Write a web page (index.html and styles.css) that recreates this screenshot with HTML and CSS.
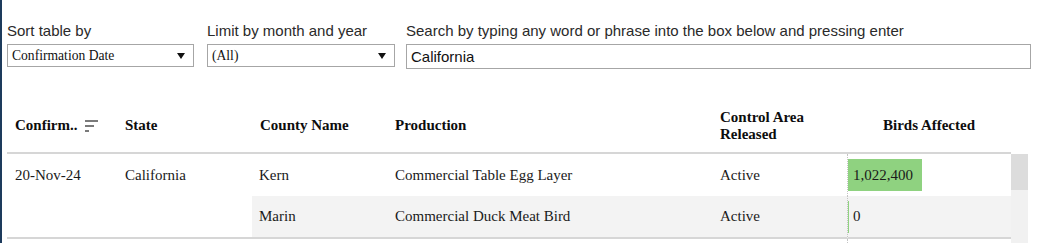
FILE: index.html
```html
<!DOCTYPE html>
<html lang="en">
<head>
<meta charset="utf-8">
<title>Confirmations</title>
<link rel="stylesheet" href="styles.css">
</head>
<body>
<div class="page">
  <div class="controls">
    <div class="ctl ctl-sort">
      <div class="lbl">Sort table by</div>
      <div class="select"><span class="sel-text">Confirmation Date</span><svg class="caret" width="8" height="6" viewBox="0 0 8 6"><polygon points="0,0 8,0 4,6" fill="#111"/></svg></div>
    </div>
    <div class="ctl ctl-limit">
      <div class="lbl">Limit by month and year</div>
      <div class="select"><span class="sel-text">(All)</span><svg class="caret" width="8" height="6" viewBox="0 0 8 6"><polygon points="0,0 8,0 4,6" fill="#111"/></svg></div>
    </div>
    <div class="ctl ctl-search">
      <div class="lbl">Search by typing any word or phrase into the box below and pressing enter</div>
      <div class="search">California</div>
    </div>
  </div>

  <div class="table">
    <div class="thead">
      <div class="th">Confirm..<svg class="sort-ico" width="14" height="12" viewBox="0 0 14 12"><rect x="0" y="0" width="13" height="2" fill="#7a7a7a"/><rect x="0" y="5" width="9" height="2" fill="#7a7a7a"/><rect x="0" y="10" width="4" height="2" fill="#7a7a7a"/></svg></div>
      <div class="th">State</div>
      <div class="th">County Name</div>
      <div class="th">Production</div>
      <div class="th">Control Area<br>Released</div>
      <div class="th th-center">Birds Affected</div>
    </div>
    <div class="tbody-wrap">
      <div class="tbody">
        <div class="td td-date">20-Nov-24</div>
        <div class="td td-state">California</div>
        <div class="td r1 first">Kern</div>
        <div class="td r1">Commercial Table Egg Layer</div>
        <div class="td r1">Active</div>
        <div class="td birds r1"><div class="bar" style="width:74px"></div><span class="val">1,022,400</span></div>

        <div class="td r2 alt first">Marin</div>
        <div class="td r2 alt">Commercial Duck Meat Bird</div>
        <div class="td r2 alt">Active</div>
        <div class="td birds r2 alt"><div class="bar" style="width:1px"></div><span class="val">0</span></div>

        <div class="filler"></div>
        <div class="filler birds-fill"></div>
      </div>
      <div class="scrollbar"><div class="thumb"></div></div>
    </div>
  </div>
</div>
</body>
</html>
```
FILE: styles.css
```css
html, body {
  height: 100%;
}
body {
  margin: 0;
  border-left: 2px solid #1d3b5c;
  box-sizing: border-box;
  background: #fff;
  overflow: hidden;
}
.page {
  padding: 0 6px 0 5px;
}
.controls {
  display: flex;
  padding-top: 21px;
}
.ctl-sort { width: 187px; margin-right: 13px; }
.ctl-limit { width: 188px; margin-right: 11px; }
.ctl-search { flex: 1; }
.lbl {
  font-family: "Liberation Sans", Arial, sans-serif;
  font-size: 15px;
  line-height: 20px;
  color: #2a2a2a;
  margin-bottom: 3px;
  white-space: nowrap;
}
.select {
  height: 23px;
  box-sizing: border-box;
  border: 1px solid #a6a6a6;
  display: flex;
  align-items: center;
  justify-content: space-between;
  padding: 0 8px 0 4px;
}
.sel-text {
  font-family: "Liberation Serif", "Times New Roman", serif;
  font-size: 13.6px;
  color: #111;
}
.caret { display: block; }
.search {
  height: 25px;
  box-sizing: border-box;
  border: 1px solid #a6a6a6;
  display: flex;
  align-items: center;
  padding: 0 4px;
  font-family: "Liberation Sans", Arial, sans-serif;
  font-size: 15px;
  color: #111;
}
.table {
  margin-top: 32px;
  font-family: "Liberation Serif", "Times New Roman", serif;
  font-size: 15px;
  color: #1a1a1a;
}
.thead {
  display: grid;
  grid-template-columns: 110px 135px 135px 325px 135px 164px;
  height: 53px;
  padding-bottom: 2px;
  border-bottom: 2px solid #d6d6d6;
  width: 1004px;
  box-sizing: border-box;
}
.th {
  display: flex;
  align-items: center;
  padding-left: 8px;
  font-weight: bold;
  color: #0d0d0d;
  line-height: 17px;
}
.th-center {
  justify-content: center;
  padding-left: 0;
}
.sort-ico {
  margin-left: 7px;
  margin-top: 1px;
}
.tbody-wrap {
  display: flex;
  height: 90px;
  overflow: hidden;
}
.tbody {
  display: grid;
  grid-template-columns: 110px 135px 135px 325px 135px 164px;
  grid-template-rows: 42px 43px 20px;
  width: 1004px;
}
.td {
  display: flex;
  align-items: center;
  padding-left: 8px;
  white-space: nowrap;
}
.td-date, .td-state {
  grid-row: 1 / 3;
  align-items: flex-start;
  padding-top: 13px;
  border-bottom: 2px solid #d6d6d6;
}
.td-date { grid-column: 1; }
.td-state { grid-column: 2; }
.r2 { border-bottom: 2px solid #d6d6d6; }
.alt { background: #f3f3f3; }
.first { padding-left: 7px; }
.birds {
  display: grid;
  align-items: center;
  padding-left: 0;
  border-left: 1px dotted #c4c4c4;
}
.birds > * { grid-area: 1 / 1; }
.bar {
  height: 32px;
  background: #8fd280;
}
.val {
  padding-left: 5px;
  color: #1a1a1a;
}
.filler { grid-column: 1 / 6; }
.birds-fill { grid-column: 6; border-left: 1px dotted #c4c4c4; }
.scrollbar {
  width: 17px;
  background: #f1f1f1;
  display: flex;
  flex-direction: column;
}
.thumb {
  height: 36px;
  background: #dcdcdc;
}
```
